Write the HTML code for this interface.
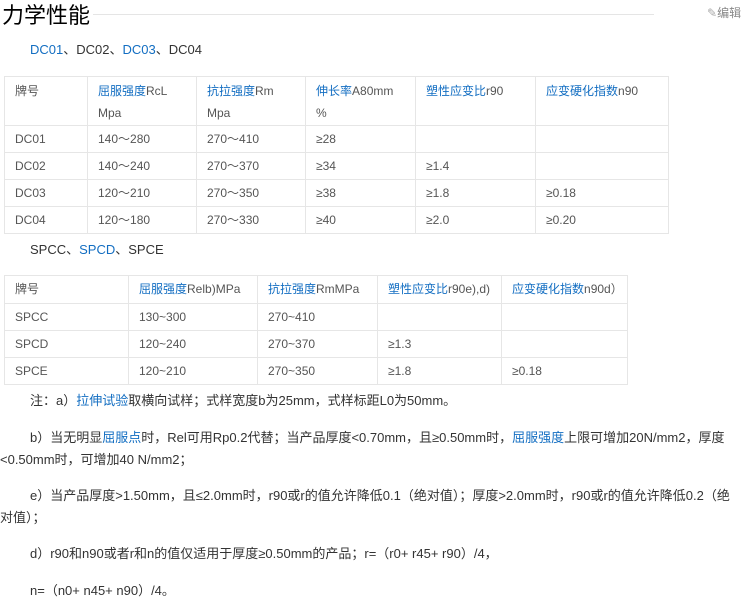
<!DOCTYPE html>
<html><head><meta charset="utf-8"><style>
body{margin:0;width:750px;height:608px;background:#fff;font-family:"Liberation Sans","Noto Sans CJK SC",sans-serif;color:#333;position:relative;overflow:hidden}
.a{position:absolute;white-space:nowrap}
a{color:#136ec2;text-decoration:none}
table{position:absolute;border-collapse:collapse;table-layout:fixed;font-size:12px;color:#555}
td{border:1px solid #e6e6e6;padding:0 0 0 10px;vertical-align:top;line-height:26px}
td a{color:#136ec2}
p{position:absolute;margin:0;font-size:13px;line-height:22px;left:0;width:742px}
</style></head><body>
<div class="a" style="left:2px;top:2px;font-size:22px;color:#000;line-height:28px">力学性能</div>
<div class="a" style="left:93px;top:14px;width:561px;height:1px;background:#e5e5e5"></div>
<div class="a" style="left:707px;top:5px;font-size:12px;color:#888;line-height:16px"><span style="color:#aaa">&#9998;</span>编辑</div>
<div class="a" style="left:30px;top:41px;font-size:13px;line-height:18px"><a>DC01</a>、DC02、<a>DC03</a>、DC04</div>
<table style="left:4px;top:76px;width:664px">
<col style="width:83px"><col style="width:109px"><col style="width:109px"><col style="width:110px"><col style="width:120px"><col style="width:133px">
<tr style="height:49px"><td style="line-height:22px;padding-top:3px">牌号</td><td style="line-height:22px;padding-top:3px"><a>屈服强度</a>RcL<br>Mpa</td><td style="line-height:22px;padding-top:3px"><a>抗拉强度</a>Rm<br>Mpa</td><td style="line-height:22px;padding-top:3px"><a>伸长率</a>A80mm<br>%</td><td style="line-height:22px;padding-top:3px"><a>塑性应变比</a>r90</td><td style="line-height:22px;padding-top:3px"><a>应变硬化指数</a>n90</td></tr>
<tr style="height:27px"><td>DC01</td><td>140～280</td><td>270～410</td><td>≥28</td><td></td><td></td></tr>
<tr style="height:27px"><td>DC02</td><td>140～240</td><td>270～370</td><td>≥34</td><td>≥1.4</td><td></td></tr>
<tr style="height:27px"><td>DC03</td><td>120～210</td><td>270～350</td><td>≥38</td><td>≥1.8</td><td>≥0.18</td></tr>
<tr style="height:27px"><td>DC04</td><td>120～180</td><td>270～330</td><td>≥40</td><td>≥2.0</td><td>≥0.20</td></tr>
</table>
<div class="a" style="left:30px;top:241px;font-size:13px;line-height:18px">SPCC、<a>SPCD</a>、SPCE</div>
<table style="left:4px;top:275px;width:623px">
<col style="width:124px"><col style="width:129px"><col style="width:120px"><col style="width:124px"><col style="width:126px">
<tr style="height:28px"><td>牌号</td><td><a>屈服强度</a>Relb)MPa</td><td><a>抗拉强度</a>RmMPa</td><td><a>塑性应变比</a>r90e),d)</td><td><a>应变硬化指数</a>n90d）</td></tr>
<tr style="height:27px"><td>SPCC</td><td>130~300</td><td>270~410</td><td></td><td></td></tr>
<tr style="height:27px"><td>SPCD</td><td>120~240</td><td>270~370</td><td>≥1.3</td><td></td></tr>
<tr style="height:27px"><td>SPCE</td><td>120~210</td><td>270~350</td><td>≥1.8</td><td>≥0.18</td></tr>
</table>
<p style="top:390px;text-indent:30px">注：a）<a>拉伸试验</a>取横向试样；式样宽度b为25mm，式样标距L0为50mm。</p>
<p style="top:427px;text-indent:30px">b）当无明显<a>屈服点</a>时，Rel可用Rp0.2代替；当产品厚度&lt;0.70mm，且≥0.50mm时，<a>屈服强度</a>上限可增加20N/mm2，厚度&lt;0.50mm时，可增加40 N/mm2；</p>
<p style="top:485px;text-indent:30px">e）当产品厚度&gt;1.50mm，且≤2.0mm时，r90或r的值允许降低0.1（绝对值）；厚度&gt;2.0mm时，r90或r的值允许降低0.2（绝<br>对值）；</p>
<p style="top:543px;text-indent:30px">d）r90和n90或者r和n的值仅适用于厚度≥0.50mm的产品；r=（r0+ r45+ r90）/4，</p>
<p style="top:580px;text-indent:30px">n=（n0+ n45+ n90）/4。</p>
</body></html>
